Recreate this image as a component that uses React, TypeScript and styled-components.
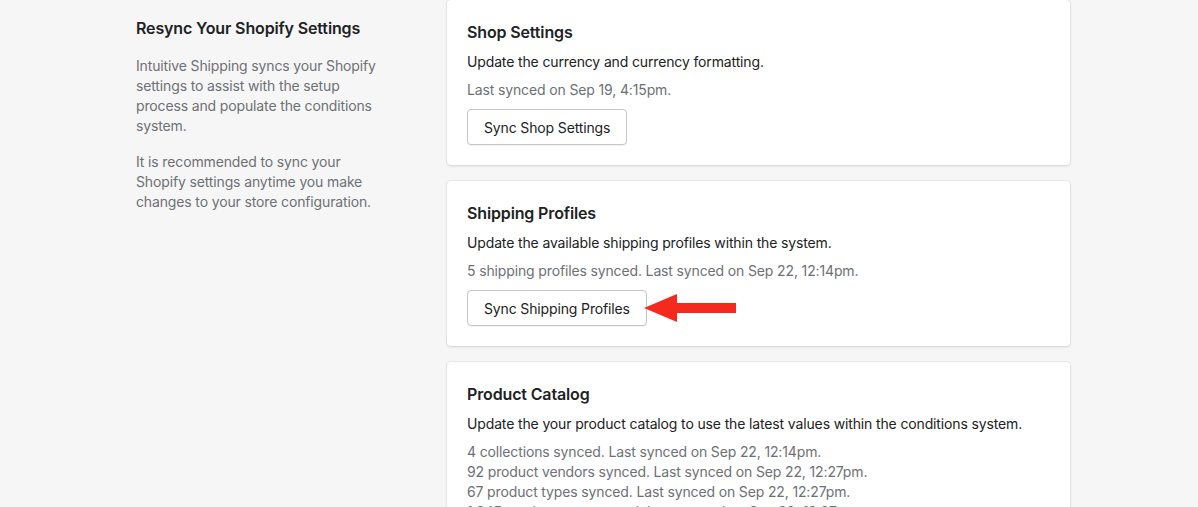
import React from 'react';
import styled, { createGlobalStyle } from 'styled-components';

const GlobalStyle = createGlobalStyle`
    html, body {
        margin: 0;
        padding: 0;
        height: 507px;
        overflow: hidden;
        background: #f6f6f7;
    }
    body {
        font-family: Inter, "Noto Sans", "Liberation Sans", sans-serif;
        letter-spacing: -0.14px;
        color: #202223;
        -webkit-font-smoothing: antialiased;
    }
`;

const Page = styled.div`
    display: grid;
    grid-template-columns: 311px 623px;
    padding-left: 136px;
`;

const Annotation = styled.div`
    padding-top: 16px;
    width: 242px;
`;

const AnnotationTitle = styled.h2`
    margin: 0;
    font-size: 16px;
    line-height: 24px;
    font-weight: 600;
    color: #202223;
`;

const AnnotationText = styled.p`
    margin: 16px 0 0;
    font-size: 14px;
    line-height: 20px;
    color: #6d7175;
`;

const Cards = styled.div`
    display: flex;
    flex-direction: column;
    gap: 16px;
`;

const Card = styled.section`
    background: #ffffff;
    border-radius: 4px;
    box-shadow: 0 0 0 1px rgba(63, 63, 68, 0.05), 0 1px 3px 0 rgba(63, 63, 68, 0.15);
    padding: 20px;
`;

const CardTitle = styled.h3`
    margin: 0;
    font-size: 16px;
    line-height: 24px;
    font-weight: 600;
`;

const CardText = styled.p`
    margin: 8px 0 0;
    font-size: 14px;
    line-height: 20px;
`;

const Subdued = styled.div`
    margin-top: 8px;
    font-size: 14px;
    line-height: 20px;
    color: #6d7175;
`;

const ButtonRow = styled.div`
    position: relative;
    margin-top: 9px;
    display: flex;
    width: fit-content;
`;

const Button = styled.button`
    height: 36px;
    padding: 0 16px;
    background: #ffffff;
    border: 1px solid #c4c7ca;
    border-radius: 4px;
    box-shadow: 0 1px 0 rgba(0, 0, 0, 0.05);
    font-family: inherit;
    letter-spacing: inherit;
    font-size: 14px;
    color: #202223;
    cursor: pointer;
`;

const Arrow = styled.svg`
    position: absolute;
    left: calc(100% - 3px);
    top: 4px;
`;

type SyncCardProps = {
    title: string;
    description: string;
    status: string[];
    action?: string;
    pointed?: boolean;
};

const SyncCard: React.FC<SyncCardProps> = ({ title, description, status, action, pointed }) => (
    <Card>
        <CardTitle>{title}</CardTitle>
        <CardText>{description}</CardText>
        <Subdued>
            {status.map((line) => (
                <div key={line}>{line}</div>
            ))}
        </Subdued>
        {action && (
            <ButtonRow>
                <Button>{action}</Button>
                {pointed && (
                    <Arrow width="92" height="28" viewBox="0 0 92 28">
                        <polygon points="0,14 33,0 33,9 92,9 92,19 33,19 33,28" fill="#f5291c" />
                    </Arrow>
                )}
            </ButtonRow>
        )}
    </Card>
);

const App: React.FC = () => (
    <>
        <GlobalStyle />
        <Page>
            <Annotation>
                <AnnotationTitle>Resync Your Shopify Settings</AnnotationTitle>
                <AnnotationText>
                    Intuitive Shipping syncs your Shopify settings to assist with the setup process and populate the
                    conditions system.
                </AnnotationText>
                <AnnotationText>
                    It is recommended to sync your Shopify settings anytime you make changes to your store
                    configuration.
                </AnnotationText>
            </Annotation>
            <Cards>
                <SyncCard
                    title="Shop Settings"
                    description="Update the currency and currency formatting."
                    status={['Last synced on Sep 19, 4:15pm.']}
                    action="Sync Shop Settings"
                />
                <SyncCard
                    title="Shipping Profiles"
                    description="Update the available shipping profiles within the system."
                    status={['5 shipping profiles synced. Last synced on Sep 22, 12:14pm.']}
                    action="Sync Shipping Profiles"
                    pointed
                />
                <SyncCard
                    title="Product Catalog"
                    description="Update the your product catalog to use the latest values within the conditions system."
                    status={[
                        '4 collections synced. Last synced on Sep 22, 12:14pm.',
                        '92 product vendors synced. Last synced on Sep 22, 12:27pm.',
                        '67 product types synced. Last synced on Sep 22, 12:27pm.',
                        '1,345 product tags synced. Last synced on Sep 22, 12:27pm.',
                    ]}
                    action="Sync Product Catalog"
                />
            </Cards>
        </Page>
    </>
);

export default App;
